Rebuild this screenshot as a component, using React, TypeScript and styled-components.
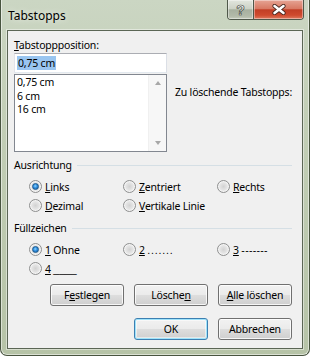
import React from 'react';
import styled, { createGlobalStyle, css } from 'styled-components';

const GlobalStyle = createGlobalStyle`
  html, body { margin: 0; padding: 0; background: #ffffff; }
  body {
    font-family: "Noto Sans", "DejaVu Sans", sans-serif;
    font-size: 10.5px;
    letter-spacing: -0.2px;
    color: #000;
  }
`;

const Window = styled.div`
  width: 310px;
  height: 356px;
  box-sizing: border-box;
  border: 1px solid #48543f;
  border-top: none;
  border-radius: 0 0 7px 7px;
  background: linear-gradient(180deg, #cbd6c3 0%, #c3cfb7 30%, #b6c3a7 100%);
  box-shadow: inset 1px 0 0 rgba(255,255,255,0.5), inset -1px 0 0 rgba(255,255,255,0.5),
    inset 0 -1px 0 rgba(255,255,255,0.5);
  display: flex;
  flex-direction: column;
  overflow: hidden;
`;

const TitleBar = styled.div`
  height: 30px;
  display: flex;
  align-items: flex-start;
  flex-shrink: 0;
`;

const Title = styled.div`
  align-self: center;
  padding-left: 7px;
  font-size: 12px;
  letter-spacing: 0;
  color: #000;
  text-shadow: 0 0 6px rgba(255,255,255,0.8);
`;

const CaptionButtons = styled.div`
  margin-left: auto;
  margin-right: 5px;
  display: flex;
  flex-shrink: 0;
  height: 19px;
  border: 1px solid #4f584a;
  border-top: none;
  border-radius: 0 0 4px 4px;
  overflow: hidden;
`;

const CaptionButton = styled.div<{ $close?: boolean }>`
  height: 19px;
  flex-shrink: 0;
  box-sizing: border-box;
  display: flex;
  align-items: center;
  justify-content: center;
  box-shadow: inset 0 0 0 1px rgba(255,255,255,0.4);
  ${(p) =>
    p.$close
      ? css`
          width: 49px;
          background: linear-gradient(180deg, #e6a494 0%, #d87a64 45%, #c23e25 52%, #cf4a2e 80%, #de7b5f 100%);
        `
      : css`
          width: 26px;
          border-right: 1px solid #4f584a;
          background: linear-gradient(180deg, #e2e6de 0%, #ccd2c6 45%, #a7b09f 52%, #b2baa9 85%, #c4cbbb 100%);
        `}
`;

const HelpGlyph = styled.span`
  font-family: "Liberation Sans", Arial, sans-serif;
  font-weight: bold;
  font-size: 14px;
  letter-spacing: 0;
  color: #fff;
  -webkit-text-stroke: 0.7px #3f463c;
  line-height: 1;
`;

const Client = styled.div`
  margin: 0 6px;
  height: 319px;
  box-sizing: border-box;
  border: 1px solid #5b6655;
  box-shadow: 0 0 0 1px rgba(255,255,255,0.45);
  background: #f0f0f0;
  padding: 7px 5px 0 6px;
  display: flex;
  flex-direction: column;
`;

const TopSection = styled.div`
  display: grid;
  grid-template-columns: 153px 1fr;
  column-gap: 8px;
`;

const LeftCol = styled.div`
  display: flex;
  flex-direction: column;
`;

const Label = styled.div`
  line-height: 14px;
  height: 14px;
  white-space: nowrap;
`;

const FieldLabel = styled(Label)`
  margin-bottom: 1px;
`;

const RightLabel = styled(Label)`
  padding-top: 47px;
`;

const TextField = styled.div`
  height: 20px;
  box-sizing: border-box;
  background: #fff;
  border: 1px solid #abadb3;
  border-color: #abadb3 #dbdfe6 #e3e9ef #e2e3ea;
  padding: 2px 2px;
  display: flex;
  align-items: center;
`;

const Selected = styled.span`
  background: #99c5f0;
  line-height: 14px;
  padding: 0 1px;
`;

const ListBox = styled.div`
  margin-top: 1px;
  height: 78px;
  box-sizing: border-box;
  background: #fff;
  border: 1px solid #828790;
  display: flex;
`;

const ListItems = styled.div`
  flex: 1;
  padding: 1px 2px;
`;

const ListItem = styled.div`
  line-height: 13.5px;
`;

const ScrollBar = styled.div`
  width: 17px;
  background: #f7f7f7;
  border-left: 1px solid #f0f0f0;
  display: flex;
  flex-direction: column;
  justify-content: space-between;
  align-items: center;
  padding: 6px 0;
`;

const Arrow = styled.div<{ $down?: boolean }>`
  width: 0;
  height: 0;
  border-left: 3.5px solid transparent;
  border-right: 3.5px solid transparent;
  ${(p) =>
    p.$down
      ? css`border-top: 4px solid #a8a8a8;`
      : css`border-bottom: 4px solid #a8a8a8;`}
`;

const GroupHeader = styled.div<{ $top: number }>`
  margin-top: ${(p) => p.$top}px;
  margin-bottom: 5px;
  display: flex;
  align-items: center;
  line-height: 14px;
  height: 14px;
  padding-right: 5px;
  &::after {
    content: '';
    flex: 1;
    margin-left: 5px;
    border-top: 1px solid #d5dfe5;
  }
`;

const RadioGrid = styled.div`
  display: grid;
  grid-template-columns: 94px 94px 94px;
  grid-auto-rows: 19px;
  padding-left: 15px;
`;

const RadioOption = styled.label`
  display: flex;
  align-items: center;
  gap: 3px;
  white-space: nowrap;
`;

const FillText = styled.span<{ $spacing: number }>`
  font-family: "Liberation Sans", Arial, sans-serif;
  letter-spacing: ${(p) => p.$spacing}px;
`;

const RadioCircle = styled.span<{ $checked?: boolean }>`
  width: 13px;
  height: 13px;
  box-sizing: border-box;
  border-radius: 50%;
  border: 1px solid #8e8f8f;
  background: radial-gradient(circle at 50% 50%, #d2d2d2 0%, #e6e6e6 50%, #f6f6f6 100%);
  box-shadow: inset 0 0 0 1px #f4f4f4;
  display: flex;
  align-items: center;
  justify-content: center;
  flex-shrink: 0;
  ${(p) =>
    p.$checked &&
    css`
      &::after {
        content: '';
        width: 5px;
        height: 5px;
        border-radius: 50%;
        background: radial-gradient(circle at 45% 40%, #8fd7ff 0%, #2f8ee0 45%, #175a96 100%);
        border: 1px solid #1d5b8f;
      }
    `}
`;

const ButtonRow = styled.div<{ $top: number }>`
  margin-top: ${(p) => p.$top}px;
  display: flex;
  justify-content: flex-end;
  gap: 10px;
  padding-right: 5px;
`;

const Button = styled.div<{ $default?: boolean }>`
  width: 74px;
  height: 22px;
  box-sizing: border-box;
  border: 1px solid #707070;
  border-radius: 3px;
  background: linear-gradient(180deg, #f2f2f2 0%, #ebebeb 48%, #dddddd 52%, #cfcfcf 100%);
  box-shadow: inset 0 0 0 1px rgba(255,255,255,0.8);
  display: flex;
  align-items: center;
  justify-content: center;
  white-space: nowrap;
  ${(p) =>
    p.$default &&
    css`
      border-color: #3c7fb1;
      box-shadow: inset 0 0 0 1px #9fe3fb, inset 0 0 0 2px rgba(255,255,255,0.5);
    `}
`;

const alignments = [
  { key: 'L', rest: 'inks', checked: true },
  { key: 'Z', rest: 'entriert' },
  { key: 'R', rest: 'echts' },
  { key: 'D', rest: 'ezimal' },
  { key: 'V', rest: 'ertikale Linie' },
];

const fills = [
  { key: '1', rest: 'Ohne', checked: true },
  { key: '2', rest: '.......', spacing: 0.8 },
  { key: '3', rest: '-------', spacing: 0.3 },
  { key: '4', rest: '____', spacing: 0 },
];

const Radio = ({
  k,
  rest,
  checked,
  spacing,
  spaced,
}: {
  k: string;
  rest: string;
  checked?: boolean;
  spacing?: number;
  spaced?: boolean;
}) => (
  <RadioOption>
    <RadioCircle $checked={checked} />
    <span>
      <u>{k}</u>
      {spaced && ' '}
      {spacing !== undefined ? <FillText $spacing={spacing}>{rest}</FillText> : rest}
    </span>
  </RadioOption>
);

const App = () => {
  return (
    <>
      <GlobalStyle />
      <Window>
        <TitleBar>
          <Title>Tabstopps</Title>
          <CaptionButtons>
            <CaptionButton>
              <HelpGlyph>?</HelpGlyph>
            </CaptionButton>
            <CaptionButton $close>
              <svg width="14" height="11" viewBox="0 0 14 11">
                <path d="M2.5 2 L11.5 9 M11.5 2 L2.5 9" stroke="#4a2a22" strokeWidth="4.2" strokeLinecap="round" />
                <path d="M2.5 2 L11.5 9 M11.5 2 L2.5 9" stroke="#fff" strokeWidth="2.5" strokeLinecap="round" />
              </svg>
            </CaptionButton>
          </CaptionButtons>
        </TitleBar>
        <Client>
          <TopSection>
            <LeftCol>
              <FieldLabel>
                <u>T</u>abstoppposition:
              </FieldLabel>
              <TextField>
                <Selected>0,75 cm</Selected>
              </TextField>
              <ListBox>
                <ListItems>
                  <ListItem>0,75 cm</ListItem>
                  <ListItem>6 cm</ListItem>
                  <ListItem>16 cm</ListItem>
                </ListItems>
                <ScrollBar>
                  <Arrow />
                  <Arrow $down />
                </ScrollBar>
              </ListBox>
            </LeftCol>
            <RightLabel>Zu löschende Tabstopps:</RightLabel>
          </TopSection>

          <GroupHeader $top={6}>Ausrichtung</GroupHeader>
          <RadioGrid>
            {alignments.map((a) => (
              <Radio key={a.key} k={a.key} rest={a.rest} checked={a.checked} />
            ))}
          </RadioGrid>

          <GroupHeader $top={6}>Füllzeichen</GroupHeader>
          <RadioGrid>
            {fills.map((f) => (
              <Radio key={f.key} k={f.key} rest={f.rest} checked={f.checked} spacing={f.spacing} spaced />
            ))}
          </RadioGrid>

          <ButtonRow $top={6}>
            <Button>
              F<u>e</u>stlegen
            </Button>
            <Button>
              Lösche<u>n</u>
            </Button>
            <Button>
              <u>A</u>lle löschen
            </Button>
          </ButtonRow>
          <ButtonRow $top={12}>
            <Button $default>OK</Button>
            <Button>Abbrechen</Button>
          </ButtonRow>
        </Client>
      </Window>
    </>
  );
};

export default App;
